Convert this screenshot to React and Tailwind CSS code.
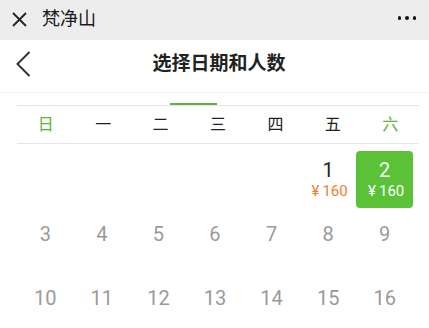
import React from 'react';

const FONT = { fontFamily: 'Roboto, "Noto Sans CJK SC", sans-serif' };

const weekdays = [
  { label: '日', green: true },
  { label: '一' },
  { label: '二' },
  { label: '三' },
  { label: '四' },
  { label: '五' },
  { label: '六', green: true },
];

// first week starts on Friday
const days = [
  null, null, null, null, null,
  { n: 1, price: '160', available: true },
  { n: 2, price: '160', available: true, selected: true },
  ...Array.from({ length: 14 }, (_, i) => ({ n: i + 3 })),
];

const Price = ({ value, className }) => (
  <span className={'text-[15px] leading-[18px] mt-[1px] pl-[3px] ' + className}>
    <span className="mr-[3px]">¥</span>
    {value}
  </span>
);

const DayCell = ({ day }) => {
  if (!day) return <div className="h-16" />;

  if (day.selected) {
    return (
      <div className="h-16 pt-[7px]">
        <div className="h-[57px] rounded-[4px] bg-[#5bc238] flex flex-col items-center pt-[8px] text-white">
          <span className="text-[20px] leading-[22px]">{day.n}</span>
          <Price value={day.price} className="text-white" />
        </div>
      </div>
    );
  }

  return (
    <div className="h-16 pt-[7px]">
      <div className="h-[57px] flex flex-col items-center pt-[8px]">
        <span
          className={
            day.available
              ? 'text-[20px] leading-[22px] text-[#222]'
              : 'text-[20px] leading-[22px] text-[#9a9a9a]'
          }
        >
          {day.n}
        </span>
        {day.price && <Price value={day.price} className="text-[#ef7f2f]" />}
      </div>
    </div>
  );
};

export default function App() {
  return (
    <div className="w-[429px] h-[328px] overflow-hidden bg-white" style={FONT}>
      {/* top bar */}
      <div className="h-10 bg-[#ededed] flex items-center pl-[12px] pr-[13px]">
        <svg width="15" height="15" viewBox="0 0 15 15" className="mb-[1px]">
          <path d="M1 1 L14 14 M14 1 L1 14" stroke="#222" strokeWidth="1.8" fill="none" />
        </svg>
        <span className="ml-[15px] text-[18px] text-[#1a1a1a] leading-none mb-[2px]">梵净山</span>
        <div className="ml-auto flex gap-[4px] items-center mb-[4px]">
          <span className="w-[3.5px] h-[3.5px] rounded-full bg-[#111]" />
          <span className="w-[3.5px] h-[3.5px] rounded-full bg-[#111]" />
          <span className="w-[3.5px] h-[3.5px] rounded-full bg-[#111]" />
        </div>
      </div>

      {/* header */}
      <div className="h-[53px] flex items-center border-b border-[#f4f4f4] pb-[4px] pl-[16px] pr-[16px]">
        <svg width="15" height="26" viewBox="0 0 15 26">
          <path d="M13.5 1 L1.5 13 L13.5 25" stroke="#333" strokeWidth="2" fill="none" />
        </svg>
        <span className="flex-1 text-center text-[19px] font-bold text-[#222] pr-[6px]">选择日期和人数</span>
      </div>

      {/* weekdays */}
      <div className="mt-[10px] pl-[17px] pr-[10px]">
        <div className="h-[2px] w-[47px] ml-[153px] bg-[#5bb53a]" />
        <div className="grid grid-cols-7 h-[39px] items-center border-t border-b border-[#e6e6e6]">
          {weekdays.map((w) => (
            <span
              key={w.label}
              className={
                w.green
                  ? 'text-center text-[16px] text-[#5cb535]'
                  : 'text-center text-[16px] text-[#222]'
              }
            >
              {w.label}
            </span>
          ))}
        </div>
      </div>

      {/* days */}
      <div className="grid grid-cols-7 pl-[17px] pr-[16px]">
        {days.map((d, i) => (
          <DayCell key={i} day={d} />
        ))}
      </div>
    </div>
  );
}
